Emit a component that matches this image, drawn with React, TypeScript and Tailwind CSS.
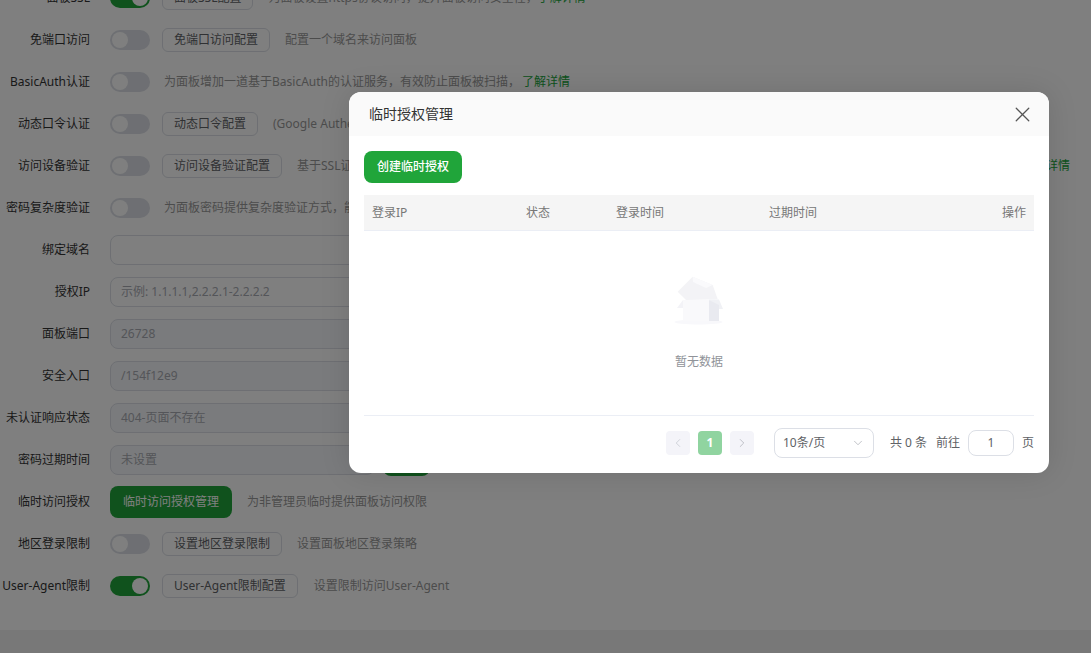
import { X, ChevronLeft, ChevronRight, ChevronDown } from "lucide-react";

function Toggle({ on = false }: { on?: boolean }) {
  return (
    <span className={`flex h-5 w-10 shrink-0 items-center rounded-full p-0.5 ${on ? "justify-end bg-[#20a53a]" : "justify-start bg-[#dcdfe6]"}`}>
      <span className="size-4 rounded-full bg-white" />
    </span>
  );
}

function OutlineButton({ children }: { children: React.ReactNode }) {
  return (
    <span className="flex h-6 shrink-0 items-center rounded-md border border-[#dcdfe6] bg-white px-[11px] text-[#606266]">
      {children}
    </span>
  );
}

function Row({ label, children }: { label: string; children: React.ReactNode }) {
  return (
    <div className="flex h-[42px] items-center">
      <label className="w-[90px] shrink-0 whitespace-nowrap text-right text-[#333]">{label}</label>
      <div className="ml-5 flex items-center gap-3">{children}</div>
    </div>
  );
}

function Desc({ children }: { children: React.ReactNode }) {
  return <span className="ml-[3px] whitespace-nowrap text-[#999]">{children}</span>;
}

function Field({ value, dark = false }: { value?: string; dark?: boolean }) {
  return (
    <div className={`flex h-[30px] w-[265px] items-center rounded-lg border border-[#dcdfe6] px-2.5 ${dark ? "bg-[#f5f7fa] text-[#a8abb2]" : "bg-white text-[#a8abb2]"}`}>
      {value}
    </div>
  );
}

function EmptyBox() {
  return (
    <svg width="60" height="60" viewBox="0 0 60 60">
      <ellipse cx="29.5" cy="52" rx="24" ry="2.5" fill="#f8f8fb" />
      <path d="M8.7 21.7 L23.7 6.7 L43.7 15 L48.7 29.3 L17 30 Z" fill="#f3f3f6" />
      <path d="M23.7 6.7 L43.7 15 L37 18 L24 12 Z" fill="#fafafc" />
      <path d="M8 38 L14 30 L14 38 Z" fill="#f3f3f7" />
      <path d="M40 29.5 L50 29.5 L54 39 L45 39 Z" fill="#f0f1f5" />
      <path d="M14 30 L40 30 L40 51 L14 51 Z" fill="#f9f9fb" />
      <path d="M40 30 L50 35 L50 51 L40 51 Z" fill="#e9eaf0" />
    </svg>
  );
}

export default function App() {
  return (
    <div className="relative h-[653px] overflow-hidden bg-white font-['Noto_Sans','Noto_Sans_CJK_SC',sans-serif] text-xs">
      <div className="-mt-[23px] flex flex-col">
        <Row label="面板SSL">
          <Toggle on />
          <OutlineButton>面板SSL配置</OutlineButton>
          <Desc>为面板设置https协议访问，提升面板访问安全性，<span className="text-[#20a53a]">了解详情</span></Desc>
        </Row>
        <Row label="免端口访问">
          <Toggle />
          <OutlineButton>免端口访问配置</OutlineButton>
          <Desc>配置一个域名来访问面板</Desc>
        </Row>
        <Row label="BasicAuth认证">
          <Toggle />
          <span className="ml-0.5 whitespace-nowrap text-[#999]">
            为面板增加一道基于BasicAuth的认证服务，有效防止面板被扫描，<span className="ml-0.5 text-[#20a53a]">了解详情</span>
          </span>
        </Row>
        <Row label="动态口令认证">
          <Toggle />
          <OutlineButton>动态口令配置</OutlineButton>
          <Desc>(Google Authenticator)</Desc>
        </Row>
        <Row label="访问设备验证">
          <Toggle />
          <OutlineButton>访问设备验证配置</OutlineButton>
          <span className="ml-[3px] flex w-[773px] justify-between whitespace-nowrap text-[#999]">
            基于SSL证书的访问设备验证
            <span className="text-[#20a53a]">了解详情</span>
          </span>
        </Row>
        <Row label="密码复杂度验证">
          <Toggle />
          <span className="ml-0.5 whitespace-nowrap text-[#999]">为面板密码提供复杂度验证方式，能够有效提升安全性</span>
        </Row>
        <Row label="绑定域名"><Field /></Row>
        <Row label="授权IP"><Field value="示例: 1.1.1.1,2.2.2.1-2.2.2.2" /></Row>
        <Row label="面板端口"><Field value="26728" dark /></Row>
        <Row label="安全入口"><Field value="/154f12e9" dark /></Row>
        <Row label="未认证响应状态"><Field value="404-页面不存在" dark /></Row>
        <Row label="密码过期时间">
          <Field value="未设置" dark />
          <span className="-ml-1 h-8 w-[47px] rounded-lg bg-[#20a53a]" />
        </Row>
        <Row label="临时访问授权">
          <span className="flex h-8 items-center rounded-lg bg-[#20a53a] px-[13px] text-white">临时访问授权管理</span>
          <span className="ml-[3px] whitespace-nowrap text-[#999]">为非管理员临时提供面板访问权限</span>
        </Row>
        <Row label="地区登录限制">
          <Toggle />
          <OutlineButton>设置地区登录限制</OutlineButton>
          <Desc>设置面板地区登录策略</Desc>
        </Row>
        <Row label="User-Agent限制">
          <Toggle on />
          <OutlineButton>User-Agent限制配置</OutlineButton>
          <span className="ml-1 whitespace-nowrap text-[#999]">设置限制访问User-Agent</span>
        </Row>
      </div>
      <div className="mt-[23px] h-[30px] bg-[#f0f0f0]" />

      <div className="absolute inset-0 bg-black/50" />

      {/* dialog */}
      <div className="absolute left-[349px] top-[92px] flex h-[381px] w-[700px] flex-col overflow-hidden rounded-xl bg-white shadow-[0_0_30px_rgba(0,0,0,0.12)]">
        <div className="flex h-11 shrink-0 items-center justify-between bg-[#fafafa] pl-5 pr-[14px]">
          <span className="text-sm text-[#333]">临时授权管理</span>
          <X className="size-[25px] text-[#555]" strokeWidth={1.2} />
        </div>
        <div className="flex flex-1 flex-col px-[15px] pt-[15px]">
          <button className="flex h-8 w-[98px] items-center justify-center rounded-lg bg-[#20a53a] font-medium text-white">创建临时授权</button>
          <div className="mt-3 grid h-9 grid-cols-[154px_90px_153px_1fr] items-center border-b border-[#ebeef5] bg-[#f5f5f5] px-2 pt-px text-[#777]">
            <span>登录IP</span>
            <span>状态</span>
            <span>登录时间</span>
            <div className="flex justify-between">
              <span>过期时间</span>
              <span>操作</span>
            </div>
          </div>
          <div className="flex h-[185px] flex-col items-center border-b border-[#ebeef5] pt-[39px]">
            <EmptyBox />
            <span className="mt-6 text-[#909399]">暂无数据</span>
          </div>
          <div className="flex flex-1 items-center pb-[3px] pl-[302px] text-[#606266]">
            <span className="flex size-6 items-center justify-center rounded-sm bg-[#f4f4f9] text-[#c0c4cc]"><ChevronLeft className="size-3.5" strokeWidth={1.2} /></span>
            <span className="ml-2 flex size-6 items-center justify-center rounded-sm bg-[#90d4a0] font-bold text-white">1</span>
            <span className="ml-2 flex size-6 items-center justify-center rounded-sm bg-[#f4f4f9] text-[#a8abb2]"><ChevronRight className="size-3.5" strokeWidth={1.2} /></span>
            <div className="ml-5 flex h-[30px] w-[100px] items-center justify-between rounded-lg border border-[#dcdfe6] pl-2 pr-2">
              <span>10条/页</span>
              <ChevronDown className="size-3.5 text-[#a8abb2]" strokeWidth={1.2} />
            </div>
            <span className="ml-4 w-[38px] whitespace-pre">共 0 条</span>
            <span className="ml-2">前往</span>
            <div className="ml-2 flex h-[26px] w-[46px] items-center justify-center rounded-lg border border-[#dcdfe6]">1</div>
            <span className="ml-2">页</span>
          </div>
        </div>
      </div>
    </div>
  );
}
